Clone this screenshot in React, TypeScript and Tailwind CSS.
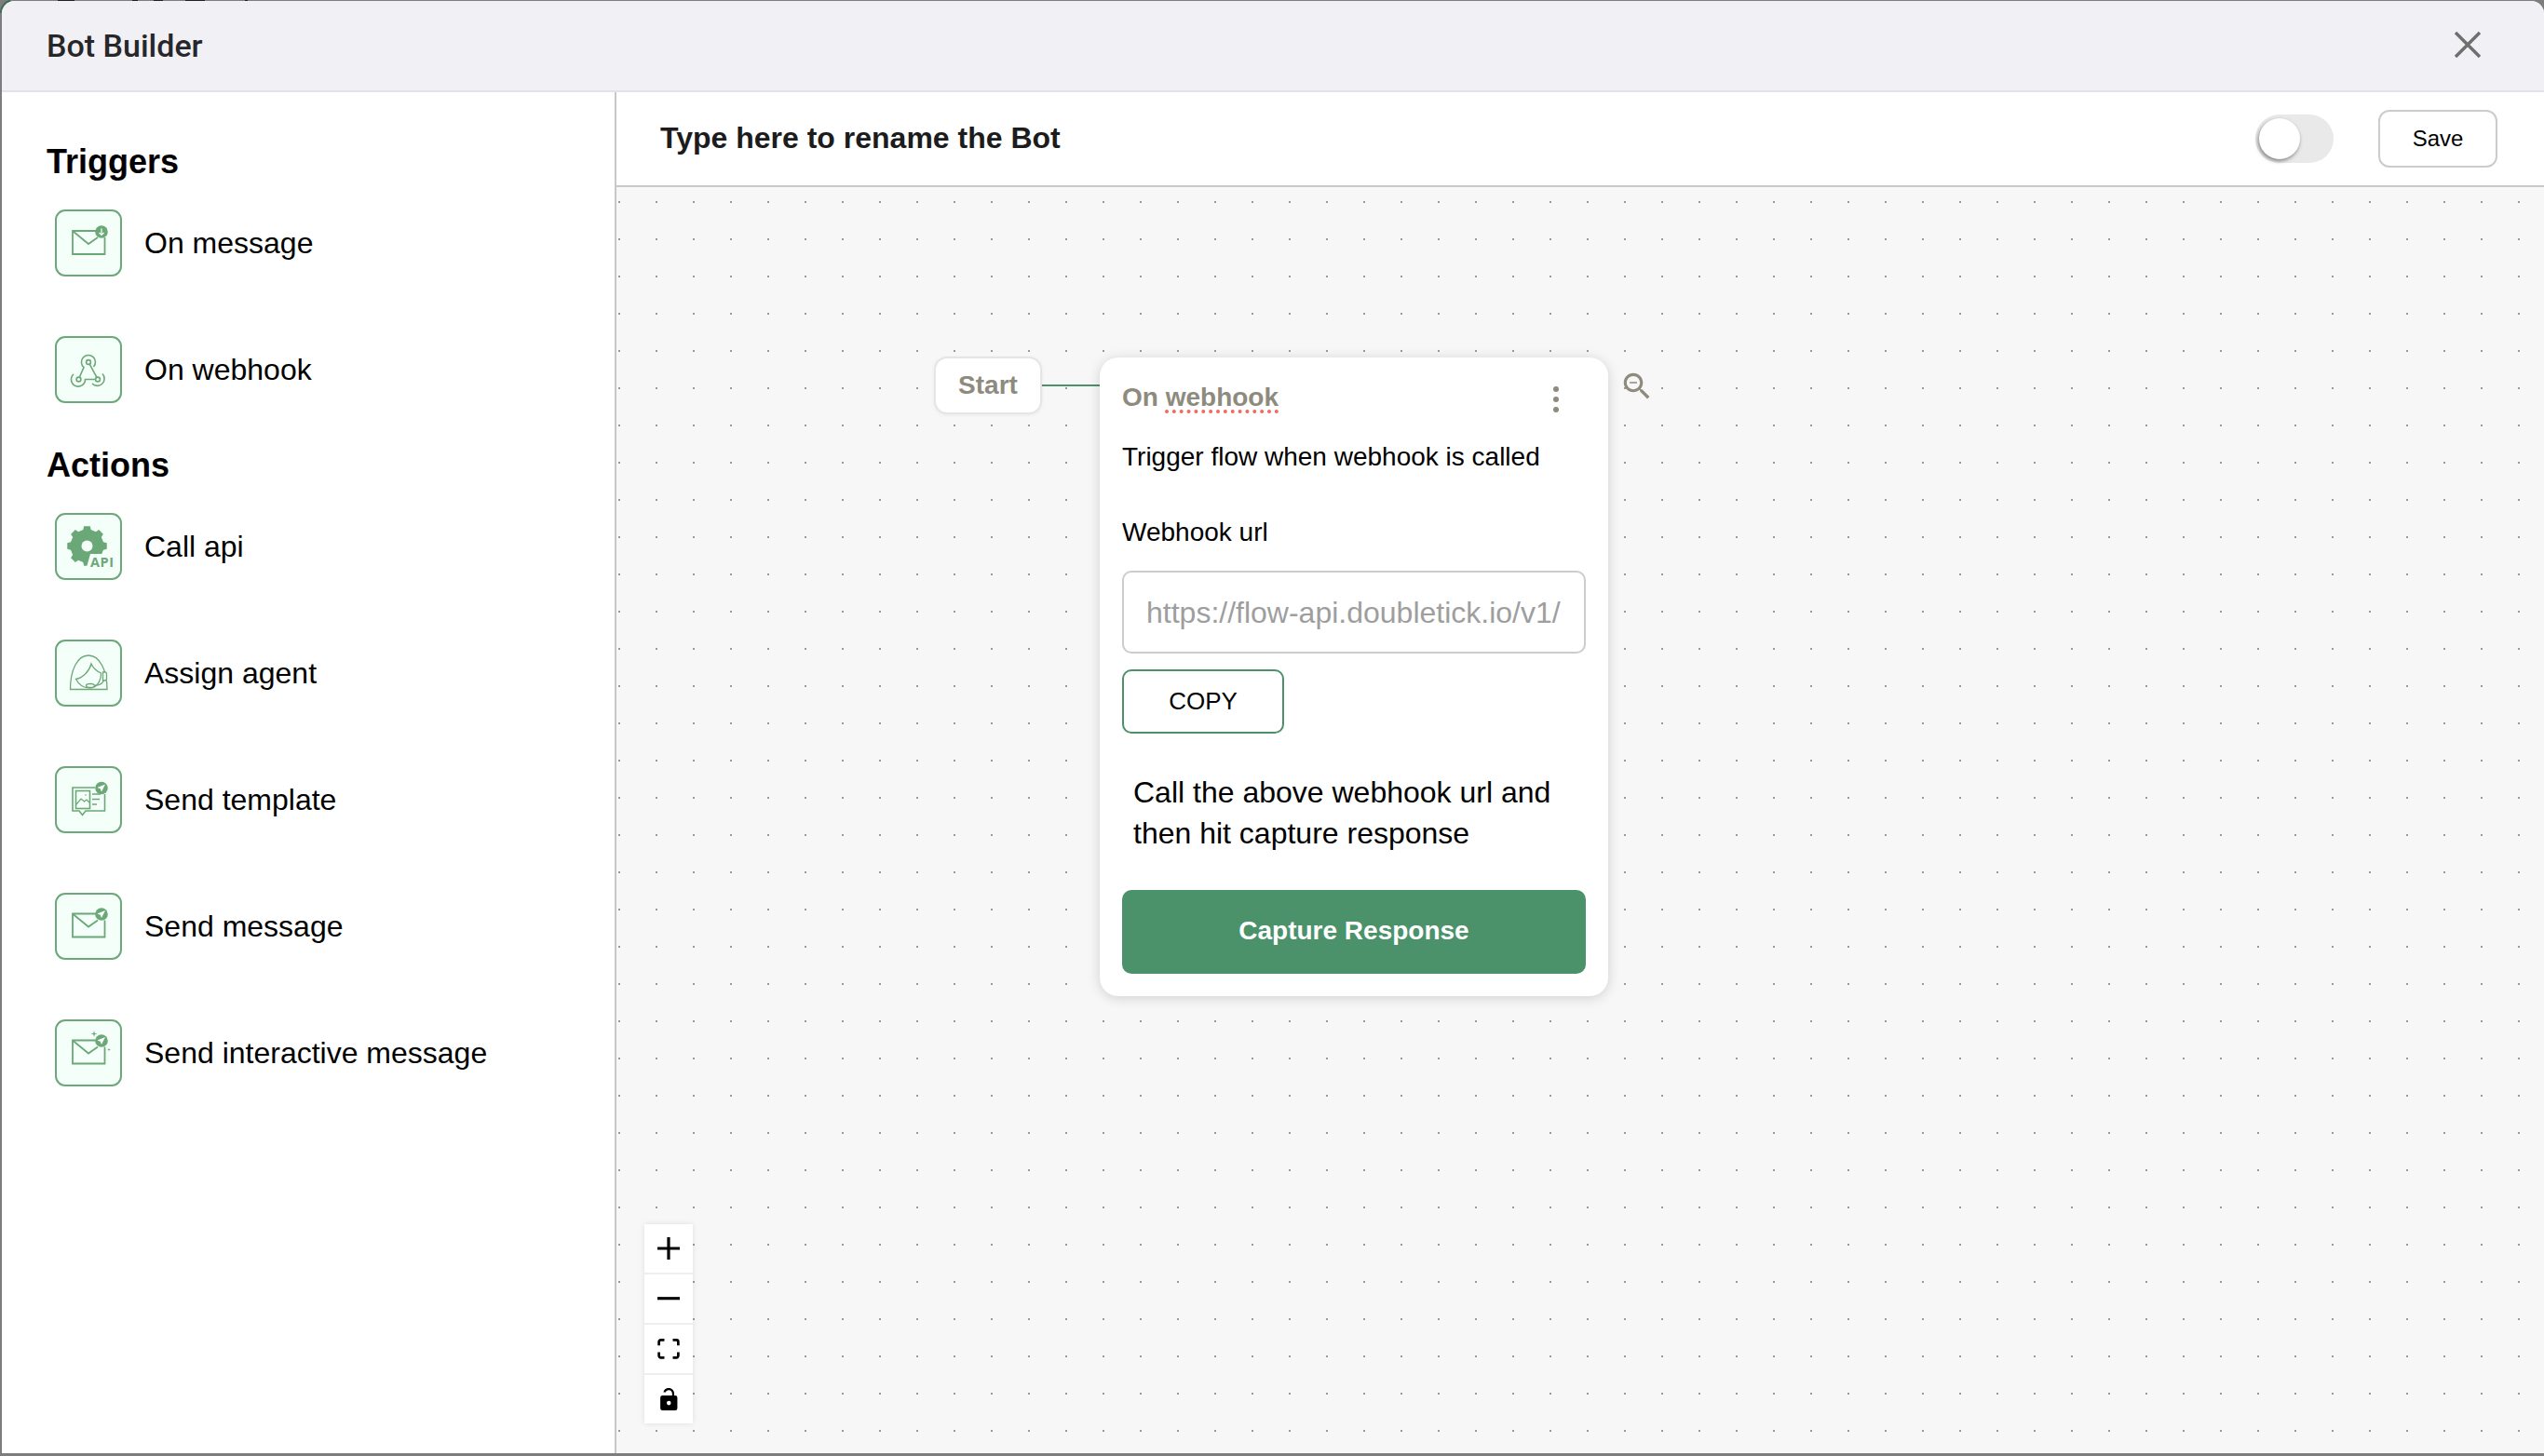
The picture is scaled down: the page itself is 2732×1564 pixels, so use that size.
import React from "react";

const G = "#6ba878";
const BG = "#f5fff9";

function Tile({ children }: { children: React.ReactNode }) {
  return (
    <div className="flex size-[72px] shrink-0 items-center justify-center rounded-[11px] border-2 border-[#6ca879] bg-[#f5fff9]">
      <svg width="72" height="72" viewBox="0 0 72 72" className="shrink-0" fill="none">
        {children}
      </svg>
    </div>
  );
}

function Envelope({ y = 23 }: { y?: number }) {
  return (
    <g stroke={G} strokeWidth="1.8" fill="none">
      <path d={`M44 ${y}H19V${y + 25}H53.5V${y + 7}`} />
      <path d={`M19.5 ${y + 0.5}L36 ${y + 14}L46 ${y + 7}`} />
    </g>
  );
}

function PlaneBadge({ y = 23 }: { y?: number }) {
  return (
    <g>
      <circle cx="50" cy={y} r="6.8" fill={G} />
      <path d={`M54 ${y - 4}L45.5 ${y - 0.5}L48.7 ${y + 0.8}L50 ${y + 4}Z`} fill="#fff" />
    </g>
  );
}

function MailDownIcon() {
  return (
    <Tile>
      <Envelope />
      <circle cx="50" cy="24" r="6.8" fill={G} />
      <path d="M50 20.5V27.5M47.5 25L50 27.5L52.5 25" stroke="#fff" strokeWidth="1.2" />
    </Tile>
  );
}

function WebhookIcon() {
  return (
    <Tile>
      <g stroke={G} strokeWidth="1.6" fill="none">
        <circle cx="36" cy="28" r="2.4" />
        <circle cx="25.5" cy="46.5" r="2.4" />
        <circle cx="46" cy="46.5" r="2.4" />
        <path d="M37.2 30.2L44.8 44.2" />
        <path d="M41.5 33A7.5 7.5 0 1 0 31 33.6L26.4 44" />
        <path d="M20 41A7.5 7.5 0 1 0 32.5 46.5H43.6" />
        <path d="M51 40.5A7.5 7.5 0 1 1 40 51" />
      </g>
    </Tile>
  );
}

const gearPoints = (() => {
  const pts: string[] = [];
  const cx = 34.5;
  const cy = 35.5;
  const teeth = 8;
  for (let i = 0; i < teeth; i++) {
    const base = (i / teeth) * Math.PI * 2 - Math.PI / 2;
    const step = (Math.PI * 2) / teeth;
    const list: [number, number][] = [
      [-0.3, 18],
      [-0.2, 21.5],
      [0.2, 21.5],
      [0.3, 18],
    ];
    list.forEach(([f, r]) => {
      const a = base + f * step;
      pts.push(`${(cx + r * Math.cos(a)).toFixed(2)},${(cy + r * Math.sin(a)).toFixed(2)}`);
    });
  }
  return pts.join(" ");
})();

function ApiIcon() {
  return (
    <Tile>
      <polygon points={gearPoints} fill={G} />
      <circle cx="34.5" cy="35.5" r="6" fill={BG} />
      <path d="M33.5 60L38 44H62V60Z" fill={BG} />
      <text x="38" y="57.5" fontSize="14.5" fontWeight="700" letterSpacing="0.6" fill={G} fontFamily="'Open Sans', sans-serif">
        API
      </text>
    </Tile>
  );
}

function AgentIcon() {
  return (
    <Tile>
      <g stroke={G} strokeWidth="1.3" fill="none" strokeLinecap="round">
        <path d="M16.5 53.5C16.5 33 24 17 36 17C48 17 56 33 56 53.5Z" />
        <path d="M22.5 42.5C30 41 37 34 39 26C41 31 45 34 49.5 36C50 43 46 50 40 51.5C32 53 26 49 22.5 42.5Z" />
        <path d="M51.5 35H54Q55.5 35 55.5 37V42Q55.5 44 53.5 44H51.5Z" fill={BG} />
        <path d="M52.5 44Q50 49 43 49.5" />
        <ellipse cx="38" cy="49.5" rx="4.5" ry="2" fill={BG} />
      </g>
    </Tile>
  );
}

function TemplateIcon() {
  return (
    <Tile>
      <g stroke={G} strokeWidth="1.6" fill="none">
        <path d="M43 23H19V48H26L29.5 52.5L33 48H53.5V30" />
        <rect x="22.5" y="26.5" width="15" height="19" />
        <path d="M23 41L28 35L31.5 38L34 36L37 39" strokeWidth="1.2" />
        <path d="M40 30H49M40 35.5H48M40 41H45" />
        <circle cx="33" cy="31" r="0.8" fill={G} stroke="none" />
      </g>
      <PlaneBadge y={23.5} />
    </Tile>
  );
}

function SendIcon() {
  return (
    <Tile>
      <Envelope y={22.5} />
      <PlaneBadge y={23} />
    </Tile>
  );
}

function Sparkle({ x, y, r }: { x: number; y: number; r: number }) {
  const s = r * 0.2;
  return (
    <path
      d={`M${x} ${y - r}L${x + s} ${y - s}L${x + r} ${y}L${x + s} ${y + s}L${x} ${y + r}L${x - s} ${y + s}L${x - r} ${y}L${x - s} ${y - s}Z`}
      fill={G}
    />
  );
}

function InteractiveIcon() {
  return (
    <Tile>
      <Envelope y={22.5} />
      <PlaneBadge y={23} />
      <Sparkle x={42} y={15.5} r={3.5} />
      <Sparkle x={58} y={32.5} r={2} />
    </Tile>
  );
}

function Row({ icon, label }: { icon: React.ReactNode; label: string }) {
  return (
    <div className="flex h-[72px] items-center gap-6">
      {icon}
      <span className="text-[32px] leading-10 text-black">{label}</span>
    </div>
  );
}

function CtrlBtn({ children, last }: { children: React.ReactNode; last?: boolean }) {
  return (
    <div className={`flex w-[52px] items-center justify-center bg-white ${last ? "h-[52px]" : "h-[54px] border-b-2 border-[#eeeeee]"}`}>
      {children}
    </div>
  );
}

export default function App() {
  return (
    <div className="relative h-screen w-screen overflow-hidden bg-[#7d7d7d] pb-[3px] pl-[2px] pt-[1px] font-['Liberation_Sans',sans-serif]">
      <svg width="300" height="20" viewBox="0 0 300 20" className="absolute left-0 top-0" fill="none">
        <path d="M0.5 14Q2 3 11 0.5" stroke="#2f6b4f" strokeWidth="1.5" />
        <path d="M62 0.5H80M142 0.5H148M165 0.5H175M199 0.5H220M263 0.5H266" stroke="#1f1f1f" strokeWidth="1" />
      </svg>
      <div className="relative flex h-full flex-col overflow-hidden rounded-t-[14px] bg-white">
        <header className="flex h-[98px] shrink-0 items-center justify-between border-b-2 border-[#e2e2ea] bg-[#f0f0f5] pl-[48px] pr-[66px]">
          <span className="font-['Roboto',sans-serif] text-[34px] font-medium leading-10 text-[#27272a]">Bot Builder</span>
          <svg width="32" height="32" viewBox="0 0 32 32" className="mb-[3px]">
            <path d="M3 3L29 29M29 3L3 29" stroke="#6f6f6f" strokeWidth="3.4" />
          </svg>
        </header>

        <div className="flex min-h-0 flex-1">
          <aside className="w-[660px] shrink-0 border-r-2 border-[#c8c8c8] bg-white pl-[48px] pt-[55px]">
            <h2 className="mb-[31px] text-[36px] font-bold leading-10 text-black">Triggers</h2>
            <div className="flex flex-col gap-[64px] pl-[9px]">
              <Row icon={<MailDownIcon />} label="On message" />
              <Row icon={<WebhookIcon />} label="On webhook" />
            </div>
            <h2 className="mb-[31px] mt-[47px] text-[36px] font-bold leading-10 text-black">Actions</h2>
            <div className="flex flex-col gap-[64px] pl-[9px]">
              <Row icon={<ApiIcon />} label="Call api" />
              <Row icon={<AgentIcon />} label="Assign agent" />
              <Row icon={<TemplateIcon />} label="Send template" />
              <Row icon={<SendIcon />} label="Send message" />
              <Row icon={<InteractiveIcon />} label="Send interactive message" />
            </div>
          </aside>

          <main className="flex min-w-0 flex-1 flex-col">
            <div className="flex h-[102px] shrink-0 items-center justify-between border-b-2 border-[#c8c8c8] bg-white pl-[47px] pr-[50px]">
              <span className="mb-[2px] text-[32px] font-bold leading-10 text-[#1c1c1c]">Type here to rename the Bot</span>
              <div className="flex items-center gap-[48px]">
                <div className="relative h-[52px] w-[84px] rounded-full bg-[#e9e9e9]">
                  <div className="absolute left-[4px] top-[4px] size-[44px] rounded-full bg-white shadow-[-1px_2px_4px_rgba(0,0,0,0.45)]" />
                </div>
                <button className="h-[62px] w-[128px] rounded-[12px] border-2 border-[#cccccc] bg-white text-[24px] text-black">Save</button>
              </div>
            </div>

            <div className="relative min-h-0 flex-1 bg-[#f7f7f7] bg-[radial-gradient(circle,#9a9a9a_1px,transparent_1.5px)] bg-[size:40px_40px] bg-[position:-17px_-4px]">
              <div className="absolute left-[457px] top-[212px] h-[2px] w-[63px] bg-[#4b926b]" />

              <div className="absolute left-[341px] top-[182px] flex h-[62px] w-[116px] items-center justify-center rounded-[14px] border-2 border-[#e5e5e5] bg-white shadow-[0_1px_4px_rgba(0,0,0,0.06)]">
                <span className="text-[28px] font-bold leading-none text-[#8e8b7e]">Start</span>
              </div>

              <div className="absolute left-[519px] top-[183px] w-[546px] rounded-[20px] bg-white px-[24px] pb-[24px] pt-[23px] shadow-[0_2px_14px_rgba(0,0,0,0.16)]">
                <div className="flex h-[40px] items-start justify-between">
                  <span className="text-[28px] font-bold leading-10 text-[#8e8b7e]">
                    On{" "}
                    <span className="underline decoration-[#f2685e] decoration-dotted decoration-[4px] underline-offset-[4px]">webhook</span>
                  </span>
                  <svg width="8" height="34" viewBox="0 0 8 34" className="mr-[28px] mt-[7px]">
                    <circle cx="4" cy="4" r="3" fill="#8e8b7e" />
                    <circle cx="4" cy="15" r="3" fill="#8e8b7e" />
                    <circle cx="4" cy="26" r="3" fill="#8e8b7e" />
                  </svg>
                </div>
                <p className="mt-[26px] text-[28px] leading-9 text-black">Trigger flow when webhook is called</p>
                <p className="mt-[45px] text-[28px] leading-9 text-black">Webhook url</p>
                <div className="mt-[23px] flex h-[89px] items-center overflow-hidden whitespace-nowrap rounded-[10px] border-2 border-[#cccccc] pl-[24px] text-[32px] text-[#9e9e9e]">
                  https://flow-api.doubletick.io/v1/
                </div>
                <button className="mt-[17px] block h-[69px] w-[174px] rounded-[10px] border-2 border-[#4b926b] bg-white text-[26px] text-black">COPY</button>
                <p className="mt-[41px] px-[12px] text-[32px] leading-[44px] text-black">
                  Call the above webhook url and then hit capture response
                </p>
                <button className="mt-[39px] block h-[90px] w-full rounded-[10px] bg-[#4b926b] pb-[2px] text-[28px] font-bold text-white">Capture Response</button>
              </div>

              <svg width="38" height="38" viewBox="0 0 24 24" className="absolute left-[1077px] top-[195px]" fill="#8e8b7e">
                <path d="M15.5 14h-.79l-.28-.27C15.41 12.59 16 11.11 16 9.5 16 5.91 13.09 3 9.5 3S3 5.91 3 9.5 5.91 16 9.5 16c1.61 0 3.09-.59 4.23-1.57l.27.28v.79l5 4.99L20.49 19l-4.99-5zm-6 0C7.01 14 5 11.99 5 9.5S7.01 5 9.5 5 14 7.01 14 9.5 11.99 14 9.5 14zM7 9h5v1H7z" />
              </svg>

              <div className="absolute bottom-[32px] left-[30px] flex flex-col shadow-[0_0_6px_rgba(0,0,0,0.1)]">
                <CtrlBtn>
                  <svg width="24" height="24" viewBox="0 0 32 32"><path d="M32 18.133H18.133V32h-4.266V18.133H0v-4.266h13.867V0h4.266v13.867H32z" /></svg>
                </CtrlBtn>
                <CtrlBtn>
                  <svg width="24" height="4" viewBox="0 0 32 5"><path d="M0 0h32v4.2H0z" /></svg>
                </CtrlBtn>
                <CtrlBtn>
                  <svg width="24" height="22" viewBox="0 0 32 30"><path d="M3.692 4.63c0-.53.4-.938.939-.938h5.215V0H4.708C2.13 0 0 2.054 0 4.63v5.216h3.692V4.631zM27.354 0h-5.2v3.692h5.17c.53 0 .984.4.984.939v5.215H32V4.631A4.624 4.624 0 0027.354 0zm.954 24.83c0 .532-.4.94-.939.94h-5.215v3.768h5.215c2.577 0 4.631-2.13 4.631-4.707v-5.139h-3.692v5.139zm-23.677.94c-.531 0-.939-.4-.939-.94v-5.138H0v5.139c0 2.577 2.13 4.707 4.708 4.707h5.138V25.77H4.631z" /></svg>
                </CtrlBtn>
                <CtrlBtn last>
                  <svg width="19" height="24" viewBox="0 0 25 32"><path d="M21.333 10.667H19.81V7.619C19.81 3.429 16.38 0 12.19 0c-4.114 0-7.448 2.828-7.619 6.095h3.048c.19-1.6 2.133-3.2 4.571-3.2 2.591 0 4.724 2.133 4.724 4.724v3.048H3.048A3.056 3.056 0 000 13.714v15.238A3.056 3.056 0 003.048 32h18.285a3.056 3.056 0 003.048-3.048V13.714a3.056 3.056 0 00-3.048-3.047zM12.19 24.533a3.056 3.056 0 01-3.047-3.047 3.056 3.056 0 013.047-3.048 3.056 3.056 0 013.048 3.048 3.056 3.056 0 01-3.048 3.047z" /></svg>
                </CtrlBtn>
              </div>
            </div>
          </main>
        </div>
      </div>
    </div>
  );
}
